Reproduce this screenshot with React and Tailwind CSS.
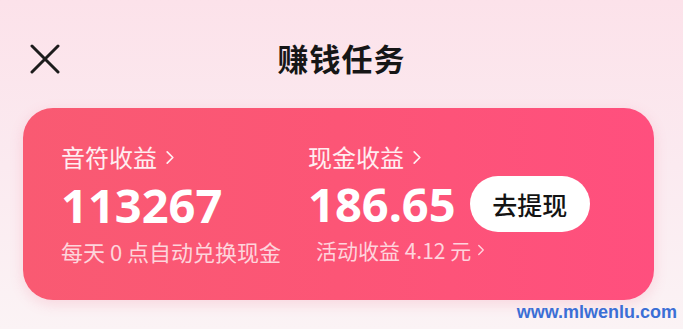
import React from "react";

const cjk = { fontFamily: '"Noto Sans CJK SC", "Noto Sans", sans-serif' };
const num = { fontFamily: '"Noto Sans", "Noto Sans CJK SC", sans-serif' };

function Chevron({ className = "" }) {
  return (
    <svg viewBox="0 0 10 16" className={className} fill="none" stroke="currentColor" strokeWidth="1.8" strokeLinecap="round" strokeLinejoin="round">
      <path d="M2 2l6 6-6 6" />
    </svg>
  );
}

export default function App() {
  return (
    <div className="relative w-[683px] h-[329px] overflow-hidden bg-gradient-to-b from-[#fce2ea] via-[#fbeaf0] to-[#fbf3f5]" style={cjk}>
      <div className="h-[108px] flex items-start pl-[30px] pt-[44px] relative">
        <svg viewBox="0 0 30 30" className="w-[30px] h-[30px] text-[#1c1c1c]" fill="none" stroke="currentColor" strokeWidth="3" strokeLinecap="round">
          <path d="M2 2l26 26M28 2L2 28" />
        </svg>
        <div className="absolute inset-x-0 top-[37px] text-center text-[31px] font-bold leading-[42px] text-[#161616] tracking-[1px]">
          赚钱任务
        </div>
      </div>

      <div className="mx-[23px] w-[631px] h-[192px] rounded-[30px] bg-gradient-to-r from-[#f95a72] via-[#fc5576] to-[#ff4f7e] shadow-[0_4px_14px_rgba(240,90,120,0.18)] pl-[38px] pt-[36px] flex">
        <div className="w-[247px] flex flex-col text-white">
          <div className="flex items-center gap-[8px] h-[26px] text-[24px] leading-[26px] text-white/90">
            <span>音符收益</span>
            <Chevron className="w-[10px] h-[15px]" />
          </div>
          <div className="mt-[12px] h-[46px] text-[47px] leading-[46px] font-bold" style={num}>113267</div>
          <div className="mt-[10px] text-[22px] leading-[26px] text-white/75">每天 0 点自动兑换现金</div>
        </div>
        <div className="flex flex-col text-white">
          <div className="flex items-center gap-[8px] h-[26px] text-[24px] leading-[26px] text-white/90">
            <span>现金收益</span>
            <Chevron className="w-[10px] h-[15px]" />
          </div>
          <div className="mt-[5px] flex items-center gap-[14px]">
            <span className="text-[47px] leading-[58px] font-bold" style={num}>186.65</span>
            <button className="w-[120px] h-[56px] rounded-full bg-white text-[#141414] text-[25px] font-medium leading-none" style={cjk}>
              去提现
            </button>
          </div>
          <div className="mt-[4px] ml-[8px] flex items-center gap-[6px] text-[21px] leading-[26px] text-white/75">
            <span>活动收益 4.12 元</span>
            <Chevron className="w-[8px] h-[12px]" />
          </div>
        </div>
      </div>

      <div className="absolute right-[6px] bottom-[3px] text-[18px] font-bold text-[#3b6fd6]" style={{ fontFamily: '"Liberation Sans", Arial, sans-serif' }}>
        www.mlwenlu.com
      </div>
    </div>
  );
}
